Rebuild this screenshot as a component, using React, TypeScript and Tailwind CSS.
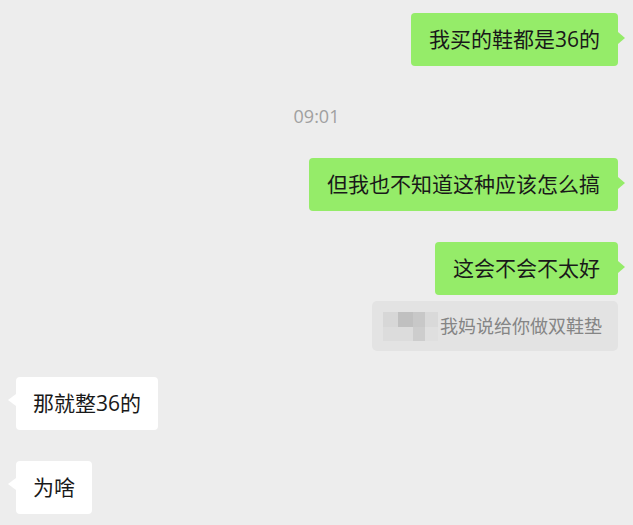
import React from "react";

const font = { fontFamily: '"Open Sans", "Noto Sans CJK SC", "Noto Sans", sans-serif' };

function RightBubble({ text }: { text: string }) {
  return (
    <div className="flex justify-end pr-[15px]">
      <div className="relative rounded-[4px] bg-[#95ec69] px-[18px] py-[12px] text-[21px] leading-[29px] text-[#191919]">
        {text}
        <span className="absolute right-[-7px] top-[19px] h-0 w-0 border-y-[6px] border-l-[7px] border-y-transparent border-l-[#95ec69]" />
      </div>
    </div>
  );
}

function LeftBubble({ text }: { text: string }) {
  return (
    <div className="flex justify-start pl-[16px]">
      <div className="relative rounded-[4px] bg-white px-[17px] py-[12px] text-[21px] leading-[29px] text-[#191919]">
        {text}
        <span className="absolute left-[-8px] top-[17px] h-0 w-0 border-y-[6px] border-r-[8px] border-y-transparent border-r-white" />
      </div>
    </div>
  );
}

export default function App() {
  return (
    <div className="h-[525px] w-[633px] overflow-hidden bg-[#ededed]" style={font}>
      <div className="flex flex-col pt-[13px]">
        <RightBubble text="我买的鞋都是36的" />
        <div className="mt-[38px] flex justify-center text-[18px] leading-[24px] text-[#a0a0a0]">09:01</div>
        <div className="mt-[30px]">
          <RightBubble text="但我也不知道这种应该怎么搞" />
        </div>
        <div className="mt-[31px]">
          <RightBubble text="这会不会不太好" />
        </div>
        <div className="mt-[6px] flex justify-end pr-[15px]">
          <div className="flex h-[50px] w-[246px] items-center rounded-[5px] bg-[#e3e3e3] pl-[11px] text-[18px] leading-[24px] text-[#858585]">
            <div className="mr-[2px] flex flex-col opacity-90">
              <div className="flex h-[15px]">
                <div className="w-[15px] bg-[#d6d6d6]" />
                <div className="w-[15px] bg-[#bdbdbd]" />
                <div className="w-[12px] bg-[#c6c6c6]" />
                <div className="w-[13px] bg-[#d9d9d9]" />
              </div>
              <div className="flex h-[14px]">
                <div className="w-[30px] bg-[#dcdcdc]" />
                <div className="w-[12px] bg-[#cbcbcb]" />
                <div className="w-[13px] bg-[#dfdfdf]" />
              </div>
            </div>
            <span>我妈说给你做双鞋垫</span>
          </div>
        </div>
        <div className="mt-[26px]">
          <LeftBubble text="那就整36的" />
        </div>
        <div className="mt-[31px]">
          <LeftBubble text="为啥" />
        </div>
      </div>
    </div>
  );
}
